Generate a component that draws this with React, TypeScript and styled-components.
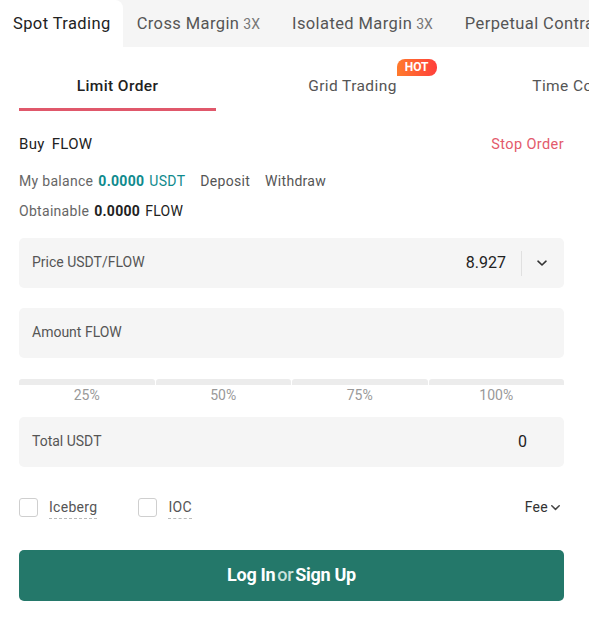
import styled, { createGlobalStyle } from 'styled-components';

const GlobalStyle = createGlobalStyle`
  html, body {
    margin: 0;
    padding: 0;
    background: #ffffff;
    overflow: hidden;
  }
  body {
    font-family: Roboto, "Liberation Sans", sans-serif;
    color: #333;
  }
`;

const Page = styled.div`
  width: 589px;
  height: 623px;
  overflow: hidden;
`;

const MarketTabs = styled.div`
  display: flex;
  height: 47px;
  background: #f5f5f5;
  white-space: nowrap;
`;

const MarketTab = styled.div<{ $active?: boolean }>`
  display: flex;
  align-items: center;
  padding: 0 12px 0 13px;
  margin-right: ${({ $active }) => ($active ? '1px' : '7px')};
  font-size: 16.5px;
  letter-spacing: 0.4px;
  color: ${({ $active }) => ($active ? '#222' : '#555')};
  background: ${({ $active }) => ($active ? '#ffffff' : 'transparent')};
  border-top-right-radius: ${({ $active }) => ($active ? '8px' : '0')};
  flex-shrink: 0;
`;

const Leverage = styled.span`
  font-size: 14px;
  margin-left: 4px;
  letter-spacing: 0;
  color: #777;
`;

const Body = styled.div`
  padding: 0 25px 0 19px;
`;

const OrderTabs = styled.div`
  display: flex;
  gap: 38px;
  margin-top: 19px;
  white-space: nowrap;
`;

const OrderTab = styled.div<{ $active?: boolean }>`
  flex: 0 0 197px;
  display: flex;
  justify-content: center;
  padding: 11px 0 13px;
  font-size: 15.5px;
  letter-spacing: 0.4px;
  font-weight: ${({ $active }) => ($active ? 500 : 400)};
  color: ${({ $active }) => ($active ? '#222' : '#555')};
  border-bottom: 3px solid ${({ $active }) => ($active ? '#e0586b' : 'transparent')};
`;

const TabLabel = styled.span`
  position: relative;
`;

const HotBadge = styled.span`
  position: absolute;
  left: 100%;
  top: -18px;
  height: 17px;
  padding: 0 8px;
  border-radius: 8px 8px 8px 0;
  background: linear-gradient(90deg, #ff7a2c, #ff3f3b);
  color: #fff;
  font-size: 12px;
  font-weight: 700;
  letter-spacing: 0;
  line-height: 17px;
`;

const TitleRow = styled.div`
  display: flex;
  justify-content: space-between;
  align-items: center;
  margin-top: 24px;
  font-size: 15px;
`;

const Title = styled.div`
  color: #222;
  word-spacing: 3px;
  letter-spacing: 0.3px;
`;

const StopOrder = styled.div`
  color: #e35a6b;
  font-size: 14.5px;
  letter-spacing: 0.4px;
`;

const InfoRow = styled.div<{ $top: number }>`
  display: flex;
  align-items: baseline;
  gap: 5px;
  margin-top: ${({ $top }) => $top}px;
  font-size: 14px;
  letter-spacing: 0.3px;
  color: #666;
`;

const Value = styled.span<{ $teal?: boolean }>`
  font-weight: 700;
  color: ${({ $teal }) => ($teal ? '#0f8a8d' : '#222')};
`;

const Unit = styled.span<{ $teal?: boolean }>`
  color: ${({ $teal }) => ($teal ? '#0f8a8d' : '#222')};
`;

const LinkText = styled.span`
  color: #555;
  margin-left: 10px;
`;

const InputBox = styled.div<{ $top: number }>`
  display: flex;
  align-items: center;
  height: 50px;
  margin-top: ${({ $top }) => $top}px;
  padding: 0 13px;
  background: #f5f5f5;
  border-radius: 5px;
  box-sizing: border-box;
`;

const InputLabel = styled.div`
  flex: 1;
  font-size: 14px;
  color: #555;
  padding-bottom: 3px;
`;

const InputValue = styled.div<{ $pad?: number }>`
  font-size: 16px;
  color: #222;
  padding-bottom: 2px;
  margin-right: ${({ $pad }) => $pad ?? 0}px;
`;

const Divider = styled.div`
  width: 1px;
  height: 25px;
  background: #e0e0e0;
  margin: 0 13px 0 15px;
`;

const Chevron = styled.svg`
  width: 14px;
  height: 14px;
  margin-right: 2px;
`;

const Slider = styled.div`
  margin-top: 21px;
  display: grid;
  grid-template-columns: repeat(4, 1fr);
  gap: 1px;
`;

const SliderStep = styled.div`
  display: flex;
  flex-direction: column;
  align-items: center;
`;

const SliderBar = styled.div`
  width: 100%;
  height: 6px;
  background: #ececec;
  border-radius: 3px 3px 0 0;
`;

const SliderLabel = styled.div`
  margin-top: 2px;
  font-size: 14px;
  color: #999;
`;

const OptionsRow = styled.div`
  display: flex;
  align-items: center;
  margin-top: 28px;
`;

const Checkbox = styled.div`
  width: 19px;
  height: 19px;
  border: 1px solid #cfcfcf;
  border-radius: 3px;
  box-sizing: border-box;
  margin-right: 11px;
`;

const OptionLabel = styled.span<{ $gap: number }>`
  font-size: 14px;
  letter-spacing: 0.3px;
  color: #555;
  border-bottom: 1px dashed #bbb;
  padding-bottom: 3px;
  margin-top: 4px;
  margin-right: ${({ $gap }) => $gap}px;
`;

const Fee = styled.div`
  margin-left: auto;
  display: flex;
  align-items: center;
  gap: 1px;
  font-size: 14px;
  letter-spacing: 0.3px;
  color: #333;
`;

const SubmitButton = styled.button`
  display: flex;
  justify-content: center;
  align-items: baseline;
  width: 100%;
  height: 51px;
  margin-top: 31px;
  border: none;
  border-radius: 5px;
  background: #24786a;
  color: #fff;
  font-family: Roboto, "Liberation Sans", sans-serif;
  font-size: 18px;
  font-weight: 700;
  padding-top: 14px;
  box-sizing: border-box;
  letter-spacing: -0.3px;
`;

const Or = styled.span`
  font-weight: 500;
  color: #c9e2dc;
  margin: 0 2px;
`;

const ChevronIcon = ({ size = 14, stroke = '#333' }: { size?: number; stroke?: string }) => (
  <Chevron viewBox="0 0 14 14" style={{ width: size, height: size }}>
    <path d="M3 5.2 L7 9 L11 5.2" fill="none" stroke={stroke} strokeWidth="1.6" strokeLinecap="round" strokeLinejoin="round" />
  </Chevron>
);

export default function App() {
  return (
    <Page>
      <GlobalStyle />
      <MarketTabs>
        <MarketTab $active>Spot Trading</MarketTab>
        <MarketTab>
          Cross Margin<Leverage>3X</Leverage>
        </MarketTab>
        <MarketTab>
          Isolated Margin<Leverage>3X</Leverage>
        </MarketTab>
        <MarketTab>Perpetual Contracts</MarketTab>
      </MarketTabs>

      <Body>
        <OrderTabs>
          <OrderTab $active>Limit Order</OrderTab>
          <OrderTab>
            <TabLabel>
              Grid Trading
              <HotBadge>HOT</HotBadge>
            </TabLabel>
          </OrderTab>
          <OrderTab>Time Condition</OrderTab>
        </OrderTabs>

        <TitleRow>
          <Title>Buy FLOW</Title>
          <StopOrder>Stop Order</StopOrder>
        </TitleRow>

        <InfoRow $top={20}>
          My balance
          <Value $teal>0.0000</Value>
          <Unit $teal>USDT</Unit>
          <LinkText>Deposit</LinkText>
          <LinkText>Withdraw</LinkText>
        </InfoRow>

        <InfoRow $top={14}>
          Obtainable
          <Value>0.0000</Value>
          <Unit>FLOW</Unit>
        </InfoRow>

        <InputBox $top={19}>
          <InputLabel>Price USDT/FLOW</InputLabel>
          <InputValue>8.927</InputValue>
          <Divider />
          <ChevronIcon size={14} />
        </InputBox>

        <InputBox $top={20}>
          <InputLabel>Amount FLOW</InputLabel>
        </InputBox>

        <Slider>
          {['25%', '50%', '75%', '100%'].map((p) => (
            <SliderStep key={p}>
              <SliderBar />
              <SliderLabel>{p}</SliderLabel>
            </SliderStep>
          ))}
        </Slider>

        <InputBox $top={14}>
          <InputLabel>Total USDT</InputLabel>
          <InputValue $pad={24}>0</InputValue>
        </InputBox>

        <OptionsRow>
          <Checkbox />
          <OptionLabel $gap={41}>Iceberg</OptionLabel>
          <Checkbox />
          <OptionLabel $gap={0}>IOC</OptionLabel>
          <Fee>
            Fee
            <ChevronIcon size={13} stroke="#444" />
          </Fee>
        </OptionsRow>

        <SubmitButton>
          Log In<Or>or</Or>Sign Up
        </SubmitButton>
      </Body>
    </Page>
  );
}
